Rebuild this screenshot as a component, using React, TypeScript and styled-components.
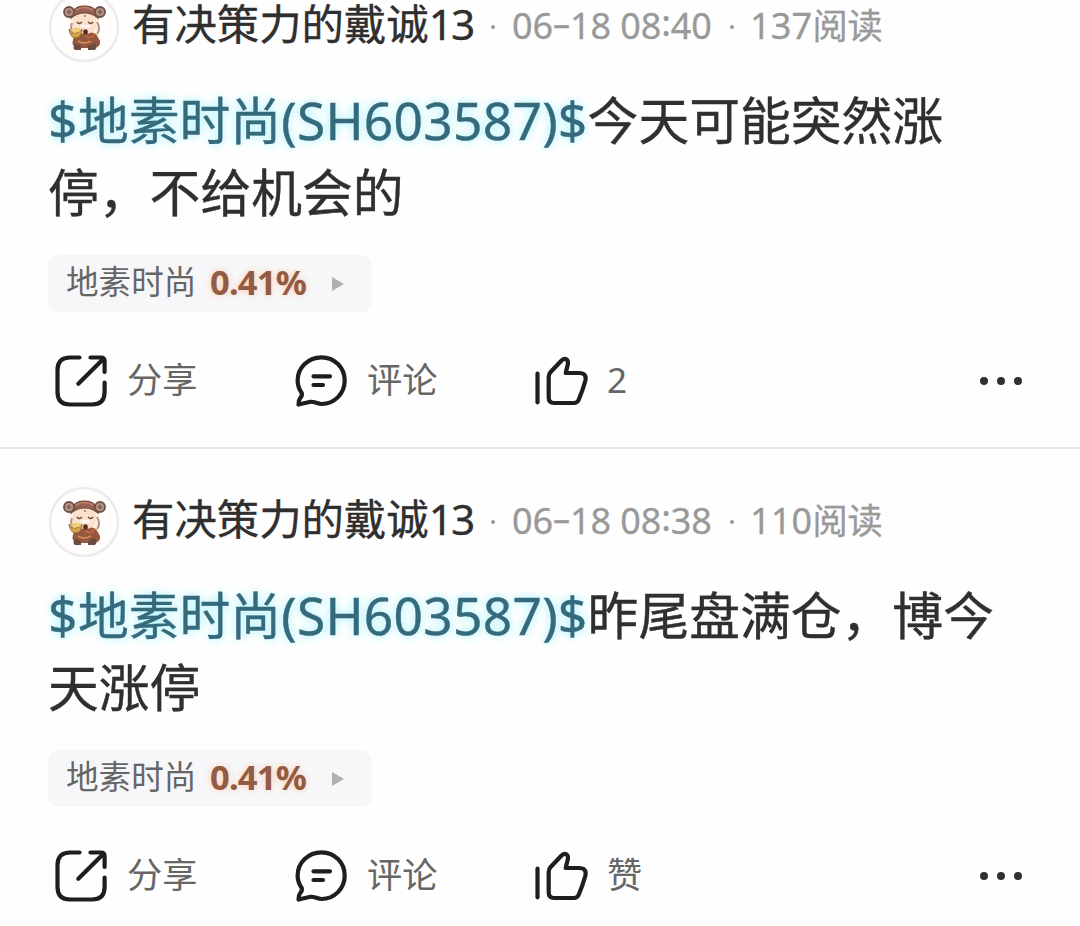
import React from 'react';
import styled, { createGlobalStyle } from 'styled-components';

const GlobalStyle = createGlobalStyle`
  * { box-sizing: border-box; }
  html, body { margin: 0; height: 926px; overflow: hidden; background: #fff; }
  body { font-family: 'Noto Sans', 'Noto Sans CJK SC', sans-serif; }
`;

const Screen = styled.main`
  width: 1080px;
  height: 926px;
  overflow: hidden;
  display: flex;
  flex-direction: column;
  justify-content: flex-start;
  background: #fefefe;
`;

const Post = styled.article<{ $scrolled?: boolean }>`
  flex: none;
  display: flex;
  flex-direction: column;
  align-items: stretch;
  height: 495px;
  margin-top: ${(p) => (p.$scrolled ? '-46px' : '0')};
  padding: 38px 48px 0;
  border-bottom: 2px solid #e9e9e9;
`;

const Header = styled.header`
  display: flex;
  align-items: center;
  height: 70px;
`;

const Avatar = styled.svg`
  flex: none;
  width: 72px;
  height: 72px;
`;

const Name = styled.span`
  flex: none;
  width: 354px;
  margin-left: 12px;
  font-size: 42.4px;
  line-height: 46px;
  margin-top: -6px;
  white-space: nowrap;
  color: #2f2f2f;
  -webkit-text-stroke: 0.35px #2f2f2f;
`;

const Dot = styled.span<{ $left?: number }>`
  flex: none;
  width: 4px;
  height: 4px;
  margin-left: ${(p) => p.$left ?? 0}px;
  border-radius: 50%;
  background: #999;
`;

const Meta = styled.span<{ $width: number; $left: number }>`
  flex: none;
  width: ${(p) => p.$width}px;
  margin-left: ${(p) => p.$left}px;
  margin-top: -4px;
  font-size: 35.2px;
  line-height: 50px;
  white-space: nowrap;
  color: #999;
  -webkit-text-stroke: 0.3px #999;
`;

const Latin = styled.span<{ $track: number; $size?: number }>`
  letter-spacing: ${(p) => p.$track}px;
  ${(p) => p.$size && `font-size: ${p.$size}px;`}
`;

const Dash = styled.span`
  display: inline-block;
  width: 17px;
  text-align: center;
  letter-spacing: 0;
  transform: translateY(-3px) scaleX(1.6);
`;

const Colon = styled.span`
  display: inline-block;
  transform: translateY(-3px);
`;

const Body = styled.p`
  margin: 22px 0 0;
  height: 144px;
  font-size: 50.8px;
  line-height: 72px;
  white-space: nowrap;
  color: #2f2f2f;
  -webkit-text-stroke: 0.4px currentColor;
`;

const StockLink = styled.a`
  color: #356a7c;
  text-shadow: 0 0 8px #b4f4ff, 0 0 11px #d0f9ff;
`;

const Chip = styled.div`
  display: flex;
  align-items: center;
  width: 324px;
  height: 57px;
  margin-top: 27px;
  padding-left: 18px;
  border-radius: 11px;
  background: #f7f7f9;
  white-space: nowrap;
`;

const ChipName = styled.span`
  width: 144px;
  font-size: 32.6px;
  line-height: 50px;
  margin-top: -3px;
  color: #666;
`;

const Percent = styled.span`
  width: 121px;
  font-size: 34.5px;
  letter-spacing: -0.8px;
  line-height: 50px;
  margin-top: -4px;
  font-weight: 700;
  color: #925c44;
  text-shadow: 0 0 7px #ffc9ad;
`;

const Triangle = styled.svg`
  width: 14px;
  height: 16px;
  margin-top: 1px;
`;

const Actions = styled.footer`
  display: flex;
  align-items: center;
  height: 52px;
  margin-top: 43px;
  padding-left: 7px;
`;

const Action = styled.div`
  display: flex;
  align-items: center;
  gap: 20px;
  width: 240px;
`;

const ActionIcon = styled.svg`
  flex: none;
  width: 52px;
  height: 52px;
  overflow: visible;
  fill: none;
  stroke: #1e1e1e;
  stroke-width: 4.2;
  stroke-linecap: round;
  stroke-linejoin: round;
`;

const Label = styled.span`
  font-size: 35.2px;
  line-height: 50px;
  margin-top: -4px;
  color: #666;
`;

const More = styled.div`
  display: flex;
  gap: 9px;
  margin-left: auto;
  margin-right: 10px;

  i {
    width: 8px;
    height: 8px;
    border-radius: 50%;
    background: #303030;
  }
`;

const AvatarArt = () => (
  <Avatar viewBox="0 0 72 72">
    <circle cx="36" cy="36" r="34" fill="#fffefd" stroke="#ececee" strokeWidth="2.6" />
    <path d="M22 29 Q23 14 36.500 14 Q50 14 51 29 L51 47 Q45 54 36 54 Q24 54 22 43Z" fill="#fff1dc" />
    <path d="M27 43 Q36 37 48 43 L52 50 Q53 57 45 57 H29 Q23 55 25 49Z" fill="#93583d" />
    <path d="M27 53 L33 55 L33 59 H27 Q24 57 27 53Z M40 55 L47 52 Q50 56 47 59 H40Z" fill="#6c4b40" />
    <path d="M24 32 Q22 38 25 41 M49 31 Q53 38 49 43" fill="none" stroke="#b2958c" strokeWidth="2" />
    <path d="M25 26 Q36 20 48 26 L48 35 Q46 43 37 43 Q27 43 25 35Z" fill="#fae0cd" />
    <path d="M23 27 Q24 15 36.500 15 Q49 15 50 27 Q44 22 36.500 22 Q29 22 23 27Z" fill="#9a6051" stroke="#694139" strokeWidth="1.200" />
    <path d="M28 19 Q36 14 45 19" fill="none" stroke="#bd8370" strokeWidth="1.500" />
    <circle cx="21" cy="21" r="5" fill="#b69382" stroke="#6b5148" strokeWidth="1.800" />
    <circle cx="52" cy="21" r="5" fill="#b69382" stroke="#6b5148" strokeWidth="1.800" />
    <path d="M18.500 21 H23.500 M21 18.500 V23.500 M49.500 21 H54.500 M52 18.500 V23.500" stroke="#65514a" strokeWidth="1.100" />
    <circle cx="37" cy="25" r=".9" fill="#d44f3c" />
    <path d="M29 31 Q31 34 34 31 M40 31 Q43 34 45 31" fill="none" stroke="#664639" strokeWidth="1.400" />
    <path d="M33 36 Q35 34 37 36 Q40 34 42 36" fill="none" stroke="#fffaf4" strokeWidth="2.200" />
    <ellipse cx="37.500" cy="41" rx="2.300" ry="2.700" fill="#5b291f" />
    <path d="M37 44 Q42 50 47 43" fill="none" stroke="#c96845" strokeWidth="1.500" />
    <path d="M21 38 Q23 43 28 42 Q33 41 34 38 Q34 47 27 47 Q22 46 21 38Z" fill="#d8a548" stroke="#91632f" strokeWidth=".9" />
    <ellipse cx="28" cy="39" rx="4.500" ry="2.300" fill="#f1cd71" />
    <path d="M30 50 Q36 54 43 50" fill="none" stroke="#d28a5a" strokeWidth="1.800" />
  </Avatar>
);

const ShareIcon = () => (
  <ActionIcon viewBox="0 0 52 52">
    <path d="M24.500 2.500 H15 Q2.500 2.500 2.500 15 V37 Q2.500 49.500 15 49.500 H37 Q49.600 49.500 49.600 37 V27.500" />
    <path d="M35.500 2.500 H46 Q49.600 2.500 49.600 6 V17 M48.500 3.800 L23.300 28.700" />
  </ActionIcon>
);

const CommentIcon = () => (
  <ActionIcon viewBox="0 0 52 52">
    <path d="M6.700 38 C4.300 34.500 2.600 30 2.600 25.500 C2.600 12.500 13.500 2.300 26.500 2.300 C39.500 2.300 49.700 12.500 49.700 25.500 C49.700 38.500 39.500 49 26.500 49 C22.500 49 19.300 46.400 15.500 46.800 L3.500 49.500 Q3.300 45.500 5.200 43 Q7.600 40.500 6.700 38Z" />
    <path d="M18.500 21.300 H35 M18.500 30 H28" />
  </ActionIcon>
);

const LikeIcon = () => (
  <ActionIcon viewBox="0 0 52 52">
    <path d="M2.500 18.700 V47.300" />
    <path d="M13.700 22 Q13.700 19 15.600 17 L26.800 5.300 Q29.500 2.800 31.800 4.700 Q33.300 6 32.900 9 L30.700 18 H44 Q52.200 18 50.300 26 Q47.800 35 43.700 44.800 Q42.300 48 39 48 H19 Q13.700 48 13.700 42.500Z" />
  </ActionIcon>
);

interface PostData {
  date: [string, string];
  time: [string, string];
  reads: string;
  lines: [string, string];
  likes: string;
}

const posts: PostData[] = [
  { date: ['06', '18'], time: ['08', '40'], reads: '137', lines: ['今天可能突然涨', '停，不给机会的'], likes: '2' },
  { date: ['06', '18'], time: ['08', '38'], reads: '110', lines: ['昨尾盘满仓，博今', '天涨停'], likes: '赞' },
];

export default function App() {
  return (
    <>
      <GlobalStyle />
      <Screen>
        {posts.map((post, index) => (
          <Post key={post.reads} $scrolled={index === 0}>
            <Header>
              <AvatarArt />
              <Name>
                有决策力的戴诚<Latin $track={-2}>13</Latin>
              </Name>
              <Dot $left={5} />
              <Meta $left={17} $width={218}>
                <Latin $track={-0.1} $size={36}>
                  {post.date[0]}
                  <Dash>-</Dash>
                  {post.date[1]} {post.time[0]}
                  <Colon>:</Colon>
                  {post.time[1]}
                </Latin>
              </Meta>
              <Dot />
              <Meta $left={16} $width={140}>
                <Latin $track={0.2} $size={36}>{post.reads}</Latin>阅读
              </Meta>
            </Header>
            <Body>
              <StockLink>
                <Latin $track={0.5} $size={51.5}>$</Latin>
                地素时尚
                <Latin $track={0.26} $size={51.5}>(SH603587)$</Latin>
              </StockLink>
              {post.lines[0]}
              <br />
              {post.lines[1]}
            </Body>
            <Chip>
              <ChipName>地素时尚</ChipName>
              <Percent>0.41%</Percent>
              <Triangle viewBox="0 0 14 16">
                <path d="M1 1 L13 8 L1 15Z" fill="#b1b1b3" />
              </Triangle>
            </Chip>
            <Actions>
              <Action>
                <ShareIcon />
                <Label>分享</Label>
              </Action>
              <Action>
                <CommentIcon />
                <Label>评论</Label>
              </Action>
              <Action>
                <LikeIcon />
                <Label>{post.likes}</Label>
              </Action>
              <More>
                <i />
                <i />
                <i />
              </More>
            </Actions>
          </Post>
        ))}
      </Screen>
    </>
  );
}
